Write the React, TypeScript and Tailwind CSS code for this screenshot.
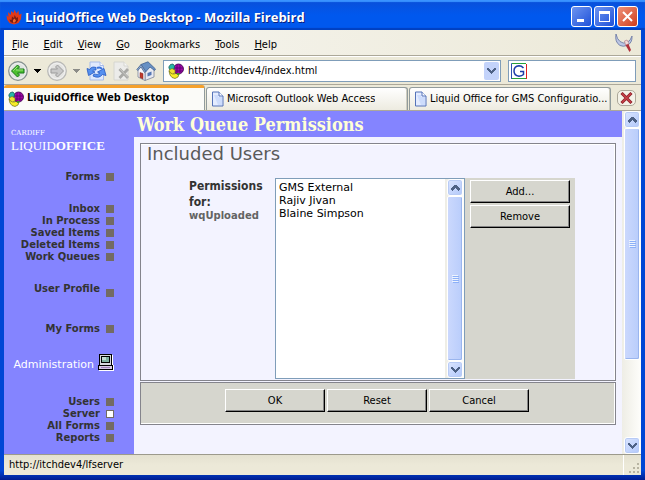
import type { ReactNode } from "react";

interface NavItemProps {
  label: string;
  active?: boolean;
  className?: string;
  boxClassName?: string;
}

const NavItem = ({ label, active, className, boxClassName }: NavItemProps) => (
  <a
    href="#"
    className={`flex h-3 items-center justify-end gap-[6px] text-[10px] leading-3 font-bold text-[#333333] ${className ?? ""}`}
  >
    {label}
    <span
      className={`h-2 w-2 border border-[#736b63] ${active ? "bg-white" : "bg-[#736b63]"} ${boxClassName ?? ""}`}
    ></span>
  </a>
);

const ScrollButton = ({ down }: { down?: boolean }) => (
  <button
    type="button"
    aria-label={down ? "Scroll down" : "Scroll up"}
    className="flex h-[17px] w-full shrink-0 items-center justify-center rounded-[3px] border border-white bg-linear-to-br from-[#dbe5ff] to-[#b2c8fa] shadow-[inset_0_0_0_1px_#b8cbf5]"
  >
    <svg width="9" height="6" viewBox="0 0 9 6" shapeRendering="crispEdges">
      <path
        d={down ? "M0.5 0.5 L4.5 4.5 L8.5 0.5" : "M0.5 5 L4.5 1 L8.5 5"}
        fill="none"
        stroke="#4d6185"
        strokeWidth="2.500"
      />
    </svg>
  </button>
);

const ScrollBar = ({ thumb }: { thumb: string }) => (
  <div className="flex w-[19px] shrink-0 flex-col bg-linear-to-r from-[#eeede5] to-[#fefefb] pr-px pl-[2px]">
    <ScrollButton />
    <div className="min-h-0 flex-1">
      <div
        className={`flex items-center justify-center rounded-[2px] border border-white bg-linear-to-r from-[#cbd8fd] to-[#b9cdfb] shadow-[inset_-1px_-1px_0_#9ab5ee] ${thumb}`}
      >
        <svg width="7" height="8" shapeRendering="crispEdges">
          <path d="M0 0.5H6M0 2.5H6M0 4.5H6M0 6.5H6" stroke="#eef4fe" />
          <path d="M1 1.5H7M1 3.5H7M1 5.5H7M1 7.5H7" stroke="#8cb0f8" />
        </svg>
      </div>
    </div>
    <ScrollButton down />
  </div>
);

const FormButton = ({ children }: { children: ReactNode }) => (
  <button
    type="button"
    className="h-[23px] w-[100px] border border-t-white border-r-black border-b-black border-l-white bg-[#d6d6ce] font-['DejaVu_Sans_Condensed',sans-serif] text-[11px] leading-4 text-black shadow-[inset_-1px_-1px_0_#848484]"
  >
    {children}
  </button>
);

const FireIcon = () => (
  <svg width="16" height="16" viewBox="0 0 16 16" className="shrink-0">
    <path
      d="M0.500 6 2.500 8 2 3 5 6 5 2 7.500 4 8.500 0.500 10.500 4.500 12.500 1.500 13 6 15.500 4.500 15 10 12.500 14 8 15.500 3.500 14 1 10.500Z"
      fill="#e03a18"
    />
    <path d="M4.500 13 3.500 10.500 5.500 11 6 7.500 8 9 8.500 6 10.500 9 12 8 12 11.500 10 14 7 14Z" fill="#7c1c10" />
    <path d="M7 13.500 7 11 8.500 9.500 10 11.500 9 13.500Z" fill="#f26a2c" />
  </svg>
);

const SiteIcon = () => (
  <svg width="16" height="16" viewBox="0 0 16 16" className="shrink-0">
    <path d="M1 8 3 10 6 11 9 10 11 11 10 14 7 15.500 4 14.500 2 12Z" fill="#f6ec28" stroke="#6c6c18" strokeWidth="0.7" />
    <circle cx="10.500" cy="6" r="5" fill="#a408a8" stroke="#38004a" strokeWidth="0.8" />
    <path d="M6 5H15M6 8H15M9 1.500V10.500M12 1.500V10.500" stroke="#4c0068" strokeWidth="0.7" />
    <path d="M0.800 4 2.500 1.500 5 1 6.500 3 6 6 3.500 7.500 1.500 6.500Z" fill="#28b8a8" stroke="#14605a" strokeWidth="0.8" />
    <path d="M1 7 4 5.500 7 7 7 10 4.500 11 2 9.500Z" fill="#f0e030" stroke="#6c6c18" strokeWidth="0.6" />
    <path d="M9 10 12 10.500 11 11.500 9 12Z" fill="#38a020" />
  </svg>
);

const PageIcon = () => (
  <svg width="13" height="16" viewBox="0 0 13 16" className="shrink-0">
    <path d="M1.500 1H8L12 5V15H1.500Z" fill="#e4ecff" stroke="#5573b8" />
    <path d="M3 4H7V6H11V14H7Z" fill="#cddcfc" />
    <path d="M8 1V5H12" fill="#fff" stroke="#5573b8" />
  </svg>
);

const ArrowIcon = ({ disabled }: { disabled?: boolean }) => (
  <svg width="20" height="20" viewBox="0 0 20 20" className={disabled ? "rotate-180" : ""}>
    <circle
      cx="10"
      cy="10"
      r="9.300"
      fill={disabled ? "#e4e4e2" : "#dfe3e0"}
      stroke={disabled ? "#b8b8b6" : "#84908f"}
      strokeWidth="1.200"
    />
    <circle cx="10" cy="10" r="7.800" fill="none" stroke="#f4f4f4" strokeWidth="0.8" />
    <path
      d="M3.500 10 9.500 4 11.500 6 9.500 8H16V12H9.500L11.500 14 9.500 16Z"
      fill={disabled ? "#c8c8c8" : "#4cc030"}
      stroke={disabled ? "#9c9c9c" : "#167818"}
      strokeLinejoin="round"
    />
    {!disabled && <path d="M5.200 9.800 9.500 5.500M8 9H15" fill="none" stroke="#a0e880" />}
  </svg>
);

const DropArrow = ({ color }: { color: string }) => (
  <svg width="7" height="4" viewBox="0 0 7 4" shapeRendering="crispEdges">
    <path d="M0 0H7L3.500 4Z" fill={color} />
  </svg>
);

const ReloadIcon = () => (
  <svg width="21" height="20" viewBox="0 0 21 20">
    <path d="M4 1H14L17.500 4.500V19H4Z" fill="#dfe9fe" stroke="#a8bce8" />
    <path d="M14 1V4.500H17.500" fill="#fff" stroke="#a8bce8" />
    <path
      d="M10 6.500Q5.500 5 3.800 8.500L1 7.500 2.500 14.500 9 11 6.500 10Q7.500 8.500 10 9Z"
      fill="#5590f0"
      stroke="#2458c0"
      strokeWidth="0.8"
    />
    <path
      d="M7 15Q13 18 16.500 13.500L20 14.500 18 7.500 11.500 11 14 12Q11.500 14.500 8 13Z"
      fill="#5590f0"
      stroke="#2458c0"
      strokeWidth="0.8"
    />
    <path d="M11 7Q14 5.500 16 8" fill="none" stroke="#3c74dc" strokeWidth="2" />
  </svg>
);

const StopIcon = () => (
  <svg width="19" height="20" viewBox="0 0 19 20">
    <path d="M2 1H12L16 5V19H2Z" fill="#ececea" stroke="#d6d6d0" />
    <path d="M12 1V5H16" fill="#f6f6f4" stroke="#d6d6d0" />
    <path d="M7.500 8 16 17M16 8 7.500 17" stroke="#a9a9a6" strokeWidth="2.800" />
    <path d="M8 8 16 16.500" stroke="#cfcfcc" strokeWidth="0.8" />
  </svg>
);

const HomeIcon = () => (
  <svg width="20" height="20" viewBox="0 0 20 20">
    <path d="M9 10 14 4 18 8V16L9 19.500Z" fill="#e8eaf2" stroke="#7b8498" strokeWidth="0.8" />
    <path d="M2 8 5 4 9 10V19.500L2 16Z" fill="#f6f6fa" stroke="#7b8498" strokeWidth="0.8" />
    <path d="M5 3.500 12 0.800 19.500 8 18.500 9.500 14 6 9.500 11Z" fill="#6790c4" stroke="#3f5f90" strokeWidth="0.8" />
    <path d="M5 3.500 0.800 8.500 1.800 9.500 5 6 8.500 11.500 9.800 10.500Z" fill="#8ca8d0" stroke="#47648f" strokeWidth="0.8" />
    <path d="M4 11.500 7 12.500V18L4 16.500Z" fill="#c0392c" stroke="#7c241c" strokeWidth="0.5" />
    <path d="M11.500 12 15.500 10.500V14L11.500 15.500Z" fill="#5577b4" />
  </svg>
);

const BirdIcon = () => (
  <svg width="18" height="20" viewBox="0 0 18 20">
    <path
      d="M1 1Q-0.500 9 5 12.500Q8 14 12 12.500Q17.500 10 17 3Q15.500 8 12 9.500Q8 11 5 8.500Q2 6 1 1Z"
      fill="#bcc6e4"
      stroke="#6f7da6"
      strokeWidth="0.9"
    />
    <path d="M9.500 8 12 7 13.500 9.500 13 12 10.500 12Z" fill="#f2dcdc" stroke="#b8848c" strokeWidth="0.7" />
    <path d="M10.500 12 13.500 11 16 17 14.500 19Z" fill="#b0303c" />
  </svg>
);

const ComputerIcon = () => (
  <svg width="16" height="17" viewBox="0 0 16 17" shapeRendering="crispEdges" className="shrink-0">
    <path d="M2 1H15V11H16V17H1V12H2Z" fill="#fff" />
    <path d="M1.500 0.500H13.500V11.500H1.500Z" fill="#d8d8e0" stroke="#000" />
    <path d="M3.500 2.500H11.500V8.500H3.500Z" fill="#7fb0a0" stroke="#000" />
    <path d="M4 3H8V6H4Z" fill="#c4dcd4" />
    <path d="M0.500 11.500H14.500V15.500H0.500Z" fill="#d8c8e8" stroke="#000" />
    <path d="M3 13.500H12" stroke="#a080b8" />
  </svg>
);

const menus = ["File", "Edit", "View", "Go", "Bookmarks", "Tools", "Help"];

const captionBtn =
  "flex h-[21px] w-[21px] items-center justify-center rounded-[3px] border border-white";

const TitleBar = () => (
  <header className="flex h-[30px] shrink-0 items-center bg-linear-to-b from-[#0a4fd8] via-[#0058ee] to-[#0058ee] pt-[3px] pr-[7px] pl-[6px] shadow-[inset_0_2px_1px_#3a93ff,inset_0_-2px_1px_#0040c0]">
    <FireIcon />
    <h1 className="min-w-0 flex-1 truncate pl-[3px] font-['Open_Sans',sans-serif] text-[13px] leading-5 font-bold text-white [text-shadow:1px_1px_0_#0a1f80]">
      LiquidOffice Web Desktop - Mozilla Firebird
    </h1>
    <div className="flex gap-[2px]">
      <button type="button" aria-label="Minimize" className={`${captionBtn} bg-linear-to-br from-[#6d93f0] to-[#1f50d8]`}>
        <svg width="13" height="13" shapeRendering="crispEdges">
          <path d="M2 9H9V12H2Z" fill="#fff" />
        </svg>
      </button>
      <button type="button" aria-label="Maximize" className={`${captionBtn} bg-linear-to-br from-[#6d93f0] to-[#1f50d8]`}>
        <svg width="13" height="13" shapeRendering="crispEdges">
          <path d="M1.500 2.500H11.500V11.500H1.500Z" fill="none" stroke="#fff" />
          <path d="M1 2H12" stroke="#fff" strokeWidth="3" />
        </svg>
      </button>
      <button type="button" aria-label="Close" className={`${captionBtn} bg-linear-to-br from-[#ee9078] to-[#cf3a14]`}>
        <svg width="13" height="13">
          <path d="M2 2 11 11M11 2 2 11" stroke="#fff" strokeWidth="2" />
        </svg>
      </button>
    </div>
  </header>
);

const Toolbar = () => (
  <div className="flex h-7 shrink-0 items-center border-t border-white pr-[5px] pl-1">
    <button type="button" aria-label="Back">
      <ArrowIcon />
    </button>
    <button type="button" aria-label="Back history" className="px-[6px]">
      <DropArrow color="#000" />
    </button>
    <button type="button" aria-label="Forward">
      <ArrowIcon disabled />
    </button>
    <button type="button" aria-label="Forward history" className="px-[6px]">
      <DropArrow color="#8c8c88" />
    </button>
    <button type="button" aria-label="Reload">
      <ReloadIcon />
    </button>
    <button type="button" aria-label="Stop" className="ml-[5px]">
      <StopIcon />
    </button>
    <button type="button" aria-label="Home" className="ml-[5px]">
      <HomeIcon />
    </button>
    <div className="ml-[7px] flex h-[22px] min-w-0 flex-1 items-center border border-[#7f9db9] bg-white pr-px pl-1">
      <SiteIcon />
      <input
        type="text"
        aria-label="Address"
        defaultValue="http://itchdev4/index.html"
        className="min-w-0 flex-1 pt-px pl-1 text-[11px] outline-none"
      />
      <button
        type="button"
        aria-label="Show history"
        className="flex h-[18px] w-[15px] items-center justify-center rounded-[2px] bg-[#c3d3fb]"
      >
        <svg width="9" height="6" shapeRendering="crispEdges">
          <path d="M0.500 0.500 4.500 4.500 8.500 0.500" fill="none" stroke="#4d6185" strokeWidth="2" />
        </svg>
      </button>
    </div>
    <div className="ml-[7px] flex h-[22px] w-[128px] items-center border border-[#7f9db9] bg-white pl-[2px]">
      <svg width="16" height="16" viewBox="0 0 16 16" className="shrink-0">
        <path d="M0.500 16V0.500H15" fill="none" stroke="#2c50b0" />
        <path d="M1 0.500H15M1 15.500H15" stroke="#28a038" />
        <path d="M15.500 1V16" stroke="#e02020" />
        <path
          d="M12.500 5Q10.500 2.800 8 2.800Q3 3.300 3 8Q3 12.700 8 13.200Q11 13 12.500 11.500V8.500H9"
          fill="none"
          stroke="#1c3ca8"
          strokeWidth="1.500"
        />
      </svg>
      <input type="text" aria-label="Search" className="min-w-0 flex-1 pl-1 text-[11px] outline-none" />
    </div>
  </div>
);

const inactiveTab =
  "mt-[2px] flex min-w-0 flex-1 items-center gap-[3px] rounded-t-[3px] border border-b-0 border-[#919b9c] bg-linear-to-b from-white to-[#edebe0] pl-1 text-[11px] shadow-[inset_-1px_0_0_#cfcdbf]";

const TabStrip = () => (
  <div className="flex h-[26px] shrink-0 gap-px border-t border-[#aca899] bg-[#ece9d8]">
    <button
      type="button"
      className="flex min-w-0 flex-1 items-center gap-[3px] rounded-t-[3px] border-t-[3px] border-r border-t-[#f5a12c] border-r-[#919b9c] bg-[#fbfbf8] pl-1 font-bold"
    >
      <SiteIcon />
      <span className="truncate pb-[3px] font-['Open_Sans',sans-serif] text-[11px]">LiquidOffice Web Desktop</span>
    </button>
    <button type="button" className={inactiveTab}>
      <PageIcon />
      <span className="truncate">Microsoft Outlook Web Access</span>
    </button>
    <button type="button" className={inactiveTab}>
      <PageIcon />
      <span className="truncate">Liquid Office for GMS Configuratio...</span>
    </button>
    <div className="flex w-[29px] items-center justify-center">
      <button
        type="button"
        aria-label="Close tab"
        className="flex h-4 w-[19px] items-center justify-center rounded-[5px] border border-[#aca899] bg-[#f4f2e8]"
      >
        <svg width="13" height="12">
          <path d="M1.500 1 11.500 11M11.500 1 1.500 11" stroke="#8c2028" strokeWidth="3" />
          <path d="M2 1.500 11 10.500M11 1.500 2 10.500" stroke="#c84048" strokeWidth="1.500" />
        </svg>
      </button>
    </div>
  </div>
);

const Sidebar = () => (
  <nav className="w-[130px] shrink-0 bg-[#8484ff] pr-5">
    <div className="h-[60px] pt-[18px] pl-[7px] font-['Liberation_Serif',serif] text-white">
      <p className="font-['DejaVu_Serif',serif] text-[7px] leading-[9px]">CARDIFF</p>
      <p className="text-[13px] leading-4">
        LIQUID<span className="font-bold">OFFICE</span>
      </p>
    </div>
    <NavItem label="Forms" />
    <NavItem label="Inbox" className="mt-5" />
    <NavItem label="In Process" />
    <NavItem label="Saved Items" />
    <NavItem label="Deleted Items" />
    <NavItem label="Work Queues" />
    <NavItem label="User Profile" className="mt-5" boxClassName="mt-2" />
    <NavItem label="My Forms" className="mt-7" />
    <a href="#" className="mt-[19px] flex items-end justify-end gap-1 text-[11px] leading-3 text-white">
      Administration
      <ComputerIcon />
    </a>
    <NavItem label="Users" className="mt-[25px]" />
    <NavItem label="Server" active />
    <NavItem label="All Forms" />
    <NavItem label="Reports" />
  </nav>
);

const WorkQueue = () => (
  <main className="min-w-0 flex-1 bg-[#f3f3ff]">
    <h2 className="h-[26px] truncate bg-[#8484ff] pl-[3px] font-['DejaVu_Serif_Condensed',serif] text-[18px] leading-7 font-bold text-[#ffffd6]">
      Work Queue Permissions
    </h2>

    <form className="mx-[6px] mt-[6px]">
      <section className="border border-[#84848c] pb-px shadow-[inset_0_1px_0_#ffffff,inset_-1px_0_0_#ffffff]">
        <h3 className="pl-[6px] text-[18px] leading-5 text-[#5a5a5a]">Included Users</h3>
        <div className="mt-[14px] flex pr-10 pl-12">
          <label htmlFor="users" className="w-[86px] shrink-0">
            <span className="block font-['DejaVu_Sans_Condensed',sans-serif] text-[12px] leading-4 font-bold text-[#333333]">
              Permissions for:
            </span>
            <span className="block text-[10px] leading-3 font-bold text-[#636363]">wqUploaded</span>
          </label>
          <div className="flex h-[201px] min-w-0 flex-1 border border-[#7f9db9] bg-white">
            <select
              id="users"
              multiple
              className="min-w-0 flex-1 appearance-none overflow-hidden pt-[2px] pl-[3px] text-[11px] leading-[13px] text-black outline-none"
            >
              <option className="min-h-0 p-0">GMS External</option>
              <option className="min-h-0 p-0">Rajiv Jivan</option>
              <option className="min-h-0 p-0">Blaine Simpson</option>
            </select>
            <ScrollBar thumb="h-full" />
          </div>
          <div className="flex w-[110px] shrink-0 flex-col items-center gap-[2px] bg-[#d6d6ce] pt-[2px]">
            <FormButton>Add...</FormButton>
            <FormButton>Remove</FormButton>
          </div>
        </div>
      </section>
      <div className="mt-px flex justify-center gap-[2px] border border-[#84848c] bg-[#d6d6ce] pt-[6px] pr-1 pb-3 pl-[2px] shadow-[inset_-1px_-1px_0_#ffffff]">
        <FormButton>OK</FormButton>
        <FormButton>Reset</FormButton>
        <FormButton>Cancel</FormButton>
      </div>
    </form>
  </main>
);

const App = () => {
  return (
    <div className="flex min-h-screen w-full flex-col bg-linear-to-b from-[#0046d5] from-98% to-[#001c90] font-['DejaVu_Sans',sans-serif] text-black">
      <TitleBar />
      <div className="mx-1 mb-[5px] flex flex-1 flex-col bg-[#ece9d8] font-['DejaVu_Sans_Condensed',sans-serif]">
        <div className="flex h-[26px] shrink-0 items-center justify-between border-b border-[#aca899] bg-linear-to-r from-[#f8f7f3] to-[#ece9d8] pr-2 pl-2">
          <div className="flex gap-[15px] pt-1">
            {menus.map((menu) => (
              <button key={menu} type="button" className="text-[11px] leading-4">
                <span className="underline">{menu[0]}</span>
                {menu.slice(1)}
              </button>
            ))}
          </div>
          <BirdIcon />
        </div>
        <Toolbar />
        <TabStrip />
        <div className="flex flex-1 border-t border-[#aca899] font-['DejaVu_Sans',sans-serif]">
          <Sidebar />
          <WorkQueue />
          <ScrollBar thumb="h-3/4" />
        </div>
        <footer className="flex h-[21px] shrink-0 items-center justify-between border-t border-[#9c9a8c] bg-linear-to-b from-[#e4e1d0] via-[#ece9d8] to-[#ece9d8] pl-[5px] text-[11px]">
          <p>http://itchdev4/lfserver</p>
          <svg width="18" height="20" shapeRendering="crispEdges">
            <path d="M0.500 0V20" stroke="#fff" />
            <path d="M14 8H16V10H14ZM10 12H12V14H10ZM14 12H16V14H14ZM6 16H8V18H6ZM10 16H12V18H10ZM14 16H16V18H14Z" fill="#b8b4a2" />
          </svg>
        </footer>
      </div>
    </div>
  );
};

export default App;
